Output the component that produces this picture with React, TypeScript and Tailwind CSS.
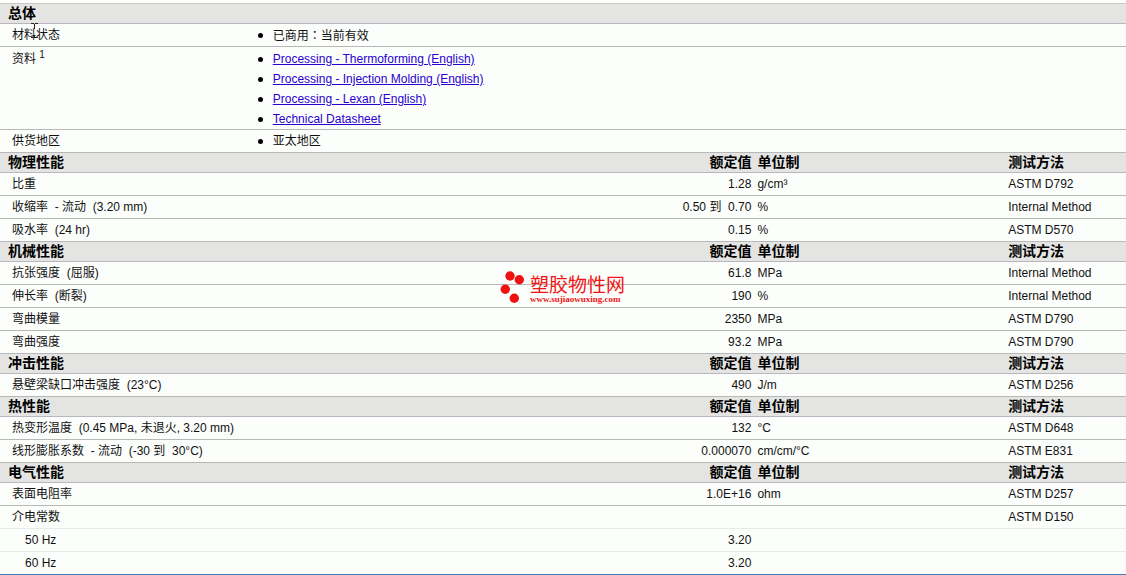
import { Fragment, ReactNode } from "react";

type Row = {
  label: string;
  value?: string;
  unit?: string;
  method?: string;
  sub?: boolean;
};

type Section = {
  title: string;
  rows: Row[];
};

const documents = [
  "Processing - Thermoforming (English)",
  "Processing - Injection Molding (English)",
  "Processing - Lexan (English)",
  "Technical Datasheet",
];

const sections: Section[] = [
  {
    title: "物理性能",
    rows: [
      { label: "比重", value: "1.28", unit: "g/cm³", method: "ASTM D792" },
      { label: "收缩率  - 流动  (3.20 mm)", value: "0.50 到  0.70", unit: "%", method: "Internal Method" },
      { label: "吸水率  (24 hr)", value: "0.15", unit: "%", method: "ASTM D570" },
    ],
  },
  {
    title: "机械性能",
    rows: [
      { label: "抗张强度  (屈服)", value: "61.8", unit: "MPa", method: "Internal Method" },
      { label: "伸长率  (断裂)", value: "190", unit: "%", method: "Internal Method" },
      { label: "弯曲模量", value: "2350", unit: "MPa", method: "ASTM D790" },
      { label: "弯曲强度", value: "93.2", unit: "MPa", method: "ASTM D790" },
    ],
  },
  {
    title: "冲击性能",
    rows: [{ label: "悬壁梁缺口冲击强度  (23°C)", value: "490", unit: "J/m", method: "ASTM D256" }],
  },
  {
    title: "热性能",
    rows: [
      { label: "热变形温度  (0.45 MPa, 未退火, 3.20 mm)", value: "132", unit: "°C", method: "ASTM D648" },
      { label: "线形膨胀系数  - 流动  (-30 到  30°C)", value: "0.000070", unit: "cm/cm/°C", method: "ASTM E831" },
    ],
  },
  {
    title: "电气性能",
    rows: [
      { label: "表面电阻率", value: "1.0E+16", unit: "ohm", method: "ASTM D257" },
      { label: "介电常数", method: "ASTM D150" },
      { label: "50 Hz", value: "3.20", sub: true },
      { label: "60 Hz", value: "3.20", sub: true },
    ],
  },
];

function SectionHeader({ title, columns = true }: { title: string; columns?: boolean }) {
  return (
    <tr className="h-5 bg-[#e4e5e3] text-sm leading-4 font-bold text-black [&>th]:border-b [&>th]:border-[#b9b6c0] [&>th]:pb-0.5">
      <th scope="col" colSpan={columns ? 1 : 4} className="pl-2 text-left">{title}</th>
      {columns && (
        <>
          <th scope="col" className="pr-[3px] text-right">额定值</th>
          <th scope="col" className="pl-[3px] text-left">单位制</th>
          <th scope="col" className="pl-1.5 text-left">测试方法</th>
        </>
      )}
    </tr>
  );
}

function GeneralRow({ label, list, children }: { label: ReactNode; list?: boolean; children: ReactNode }) {
  const padding = list ? "pt-0.5" : "pt-px";
  return (
    <tr className="h-[23px] [&>*]:border-b [&>*]:border-[#b8b8b8]">
      <th scope="row" className={`${padding} pl-3 text-left align-top font-normal leading-5`}>{label}</th>
      <td colSpan={3} className={`${padding} align-top leading-5`}>
        <ul className="list-none pl-[10px]">{children}</ul>
      </td>
    </tr>
  );
}

function Bullet({ children }: { children: ReactNode }) {
  return (
    <li className="flex items-center gap-2.5">
      <span className="size-[5px] rounded-full bg-black" />
      <span>{children}</span>
    </li>
  );
}

function PropertyRow({ row, border }: { row: Row; border: string }) {
  return (
    <tr className={`h-[23px] [&>*]:border-b ${border}`}>
      <th scope="row" className={`${row.sub ? "pl-[25px]" : "pl-3"} text-left font-normal`}>{row.label}</th>
      <td className="pr-[3px] text-right">{row.value}</td>
      <td className="pl-[3px]">{row.unit}</td>
      <td className="pl-1.5">{row.method}</td>
    </tr>
  );
}

function Watermark() {
  return (
    <div className="pointer-events-none absolute top-[270px] left-[44.4%] flex items-start gap-1.5 text-[#f01414]">
      <svg width="24" height="34" viewBox="0 0 24 34" aria-hidden="true">
        <g fill="#f01010">
          <circle cx="10" cy="6" r="4.7" />
          <circle cx="19.3" cy="9.8" r="4.7" />
          <circle cx="5.3" cy="19.2" r="4.7" />
          <circle cx="14.3" cy="28.2" r="4.7" />
        </g>
      </svg>
      <div className="pt-[7px] whitespace-nowrap">
        <p className="text-[19px] leading-[18px]">塑胶物性网</p>
        <p className="font-['Liberation_Serif',serif] text-[9px] leading-2 font-bold">www.sujiaowuxing.com</p>
      </div>
    </div>
  );
}

function TextCursor() {
  return (
    <svg
      className="pointer-events-none absolute top-[23px] left-[31px]"
      width="7"
      height="16"
      viewBox="0 0 7 16"
      stroke="#222"
      fill="none"
      aria-hidden="true"
    >
      <path d="M0 .5h3M4 .5h3M3.5 1v5M3.5 13v2M0 14.5h3M4 14.5h3" />
    </svg>
  );
}

function App() {
  return (
    <main className="relative bg-[#fcfefc] pt-[3px] font-['Liberation_Sans','Noto_Sans_CJK_SC',sans-serif]">
      <table className="w-full table-fixed border-separate border-spacing-0 border-t border-[#c8c8c8] text-xs leading-4 whitespace-pre text-[#111]">
        <colgroup>
          <col className="w-[22%]" />
          <col className="w-[45%]" />
          <col className="w-[22%]" />
          <col className="w-[11%]" />
        </colgroup>
        <tbody>
          <SectionHeader title="总体" columns={false} />
          <GeneralRow label="材料状态">
            <Bullet>
              已商用<span className="font-['Noto_Sans_CJK_TC',sans-serif]" lang="zh-TW">：</span>当前有效
            </Bullet>
          </GeneralRow>
          <GeneralRow list label={<>资料 <sup className="text-[10px]">1</sup></>}>
            {documents.map((name) => (
              <Bullet key={name}>
                <a href="#" className="text-[#2a00d0] underline hover:text-red-600">{name}</a>
              </Bullet>
            ))}
          </GeneralRow>
          <GeneralRow label="供货地区">
            <Bullet>亚太地区</Bullet>
          </GeneralRow>
          {sections.map((section, i) => (
            <Fragment key={section.title}>
              <SectionHeader title={section.title} />
              {section.rows.map((row, j) => {
                const next = section.rows[j + 1];
                const last = i === sections.length - 1 && !next;
                const border = last
                  ? "[&>*]:border-[#3f7fb0]"
                  : next?.sub
                    ? "[&>*]:border-[#e9e9e9]"
                    : "[&>*]:border-[#b8b8b8]";
                return <PropertyRow key={row.label} row={row} border={border} />;
              })}
            </Fragment>
          ))}
        </tbody>
      </table>
      <Watermark />
      <TextCursor />
    </main>
  );
}

export default App;
